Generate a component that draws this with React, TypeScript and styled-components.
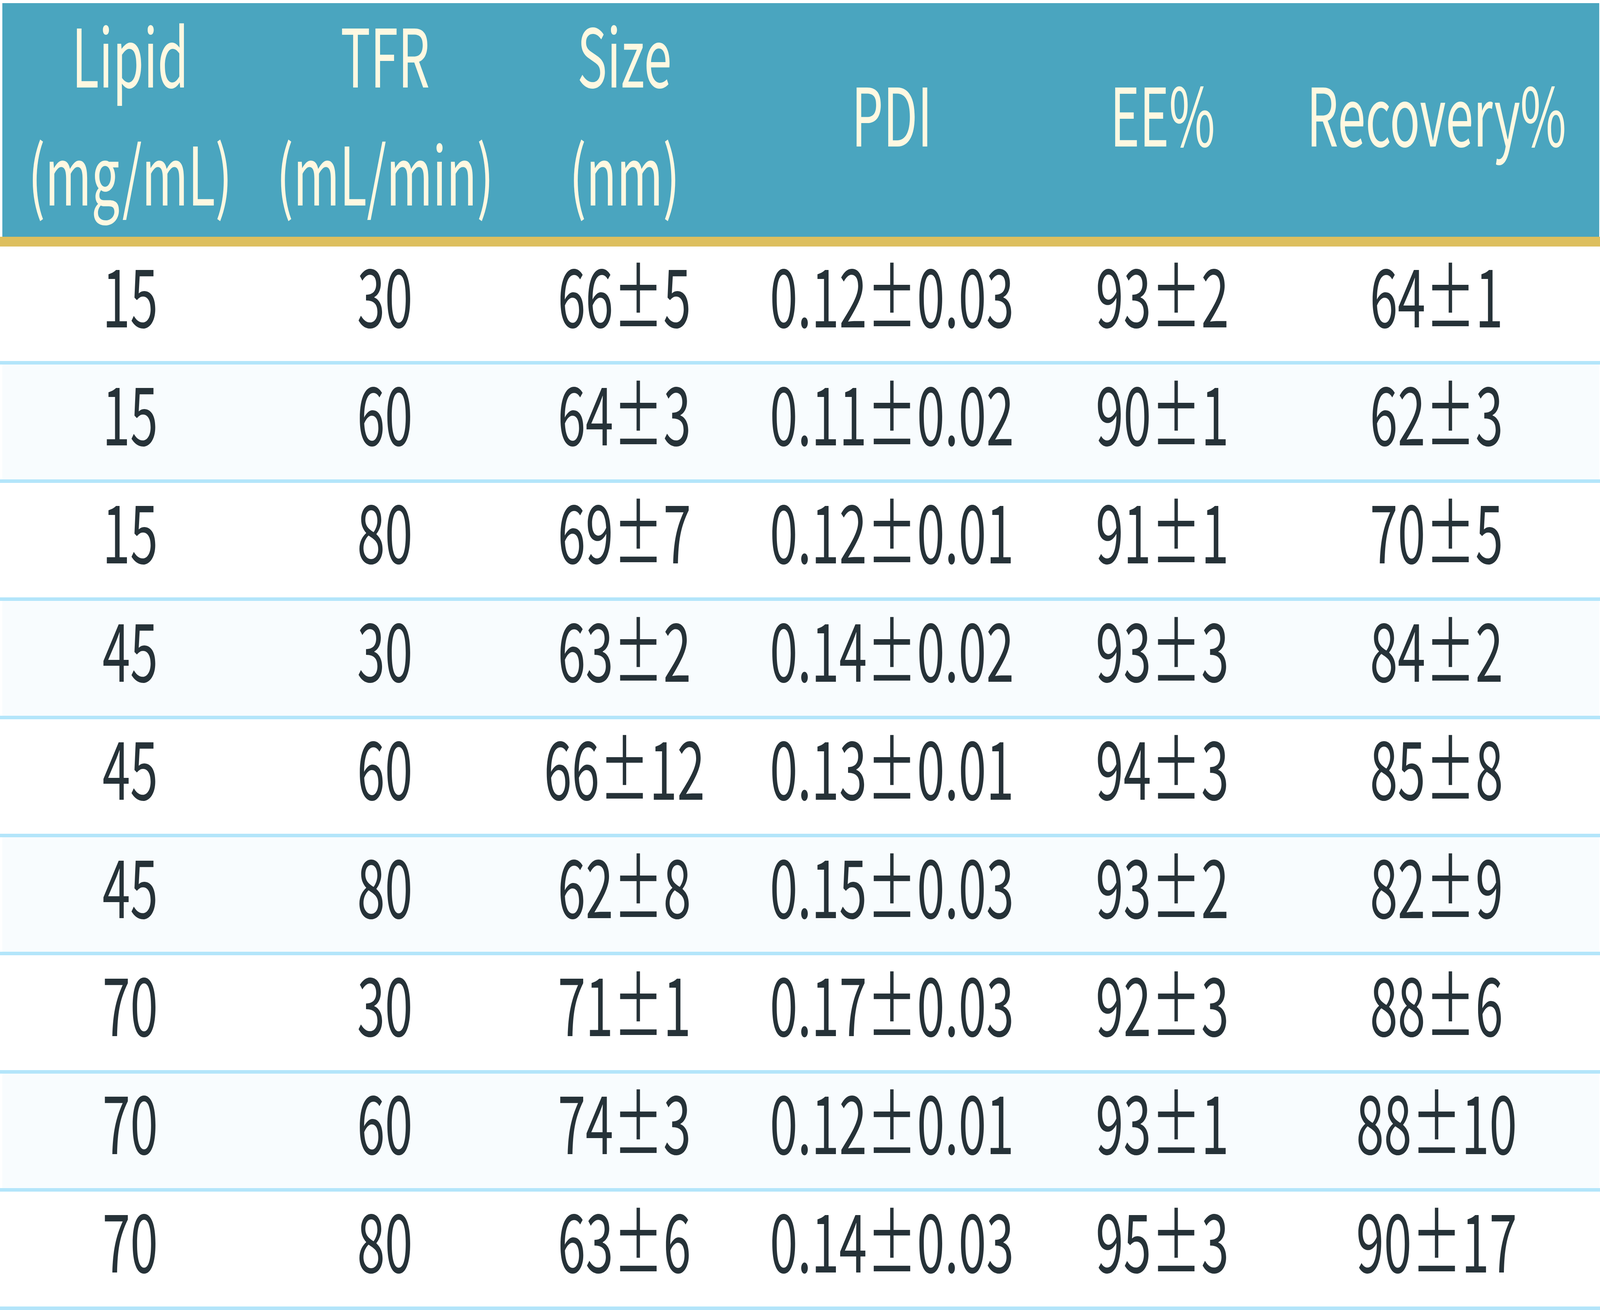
import React, { useEffect, useState } from "react";
import styled, { createGlobalStyle } from "styled-components";

const Global = createGlobalStyle`
  *, *::before, *::after {
    box-sizing: border-box;
  }
  html, body {
    margin: 0;
    padding: 0;
    background: #ffffff;
    overflow: hidden;
  }
  body {
    font-family: "Noto Sans CJK SC", "Noto Sans", sans-serif;
  }
`;

/* column widths taken from the 6037px-wide reference, kept proportional */
const COLS =
  "minmax(0, 965fr) minmax(0, 958fr) minmax(0, 848fr) minmax(0, 1170fr) minmax(0, 872fr) minmax(0, 1196fr) minmax(0, 16fr)";

const Table = styled.div`
  width: 100%;
  display: flex;
  flex-direction: column;
  font-family: "Noto Sans CJK SC", "Noto Sans", sans-serif;
  font-size: 206px;
`;

const HeaderRow = styled.div`
  margin: 8px 0.0497% 0 0.149%;
  height: 598px;
  padding-bottom: 44px;
  background: #4aa5bf;
  display: grid;
  grid-template-columns: ${COLS};
  align-items: center;
  color: #fff8e1;
`;

const HeaderCell = styled.div`
  display: flex;
  flex-direction: column;
  align-items: center;
  gap: 96px;
  line-height: 1;
  min-width: 0;
`;

const GoldRule = styled.div`
  height: 25px;
  background: #ddbf5e;
`;

const Row = styled.div`
  border-bottom: 9px solid #b3e5fa;
`;

const RowInner = styled.div<{ $shade: boolean }>`
  margin: 0 0.0497% 0 0.149%;
  height: 293.4px;
  padding-bottom: 60px;
  background: ${(p) => (p.$shade ? "#f8fcfe" : "#ffffff")};
  display: grid;
  grid-template-columns: ${COLS};
  align-items: center;
  color: #263238;
`;

const Cell = styled.div`
  display: flex;
  justify-content: center;
  line-height: 1;
  min-width: 0;
`;

const Text = styled.span`
  display: inline-block;
  flex: none;
  white-space: nowrap;
  transform: scaleX(var(--sx, 0.915));
`;

const headers: string[][] = [
  ["Lipid", "(mg/mL)"],
  ["TFR", "(mL/min)"],
  ["Size", "(nm)"],
  ["PDI"],
  ["EE%"],
  ["Recovery%"],
];

const rows: string[][] = [
  ["15", "30", "66±5", "0.12±0.03", "93±2", "64±1"],
  ["15", "60", "64±3", "0.11±0.02", "90±1", "62±3"],
  ["15", "80", "69±7", "0.12±0.01", "91±1", "70±5"],
  ["45", "30", "63±2", "0.14±0.02", "93±3", "84±2"],
  ["45", "60", "66±12", "0.13±0.01", "94±3", "85±8"],
  ["45", "80", "62±8", "0.15±0.03", "93±2", "82±9"],
  ["70", "30", "71±1", "0.17±0.03", "92±3", "88±6"],
  ["70", "60", "74±3", "0.12±0.01", "93±1", "88±10"],
  ["70", "80", "63±6", "0.14±0.03", "95±3", "90±17"],
];

const REF_W = 6037;

function useTextScale() {
  const calc = () =>
    typeof window === "undefined"
      ? 0.915
      : 0.915 * (window.innerWidth / REF_W);
  const [sx, setSx] = useState<number>(calc);
  useEffect(() => {
    const onResize = () => setSx(calc());
    onResize();
    window.addEventListener("resize", onResize);
    return () => window.removeEventListener("resize", onResize);
  }, []);
  return sx;
}

export default function App() {
  const sx = useTextScale();
  return (
    <>
      <Global />
      <Table style={{ ["--sx" as any]: sx }}>
        <HeaderRow>
          {headers.map((lines, i) => (
            <HeaderCell key={i}>
              {lines.map((l) => (
                <Text key={l}>{l}</Text>
              ))}
            </HeaderCell>
          ))}
        </HeaderRow>
        <GoldRule />
        {rows.map((r, i) => (
          <Row key={i}>
            <RowInner $shade={i % 2 === 1}>
              {r.map((v, j) => (
                <Cell key={j}>
                  <Text>{v}</Text>
                </Cell>
              ))}
            </RowInner>
          </Row>
        ))}
      </Table>
    </>
  );
}
